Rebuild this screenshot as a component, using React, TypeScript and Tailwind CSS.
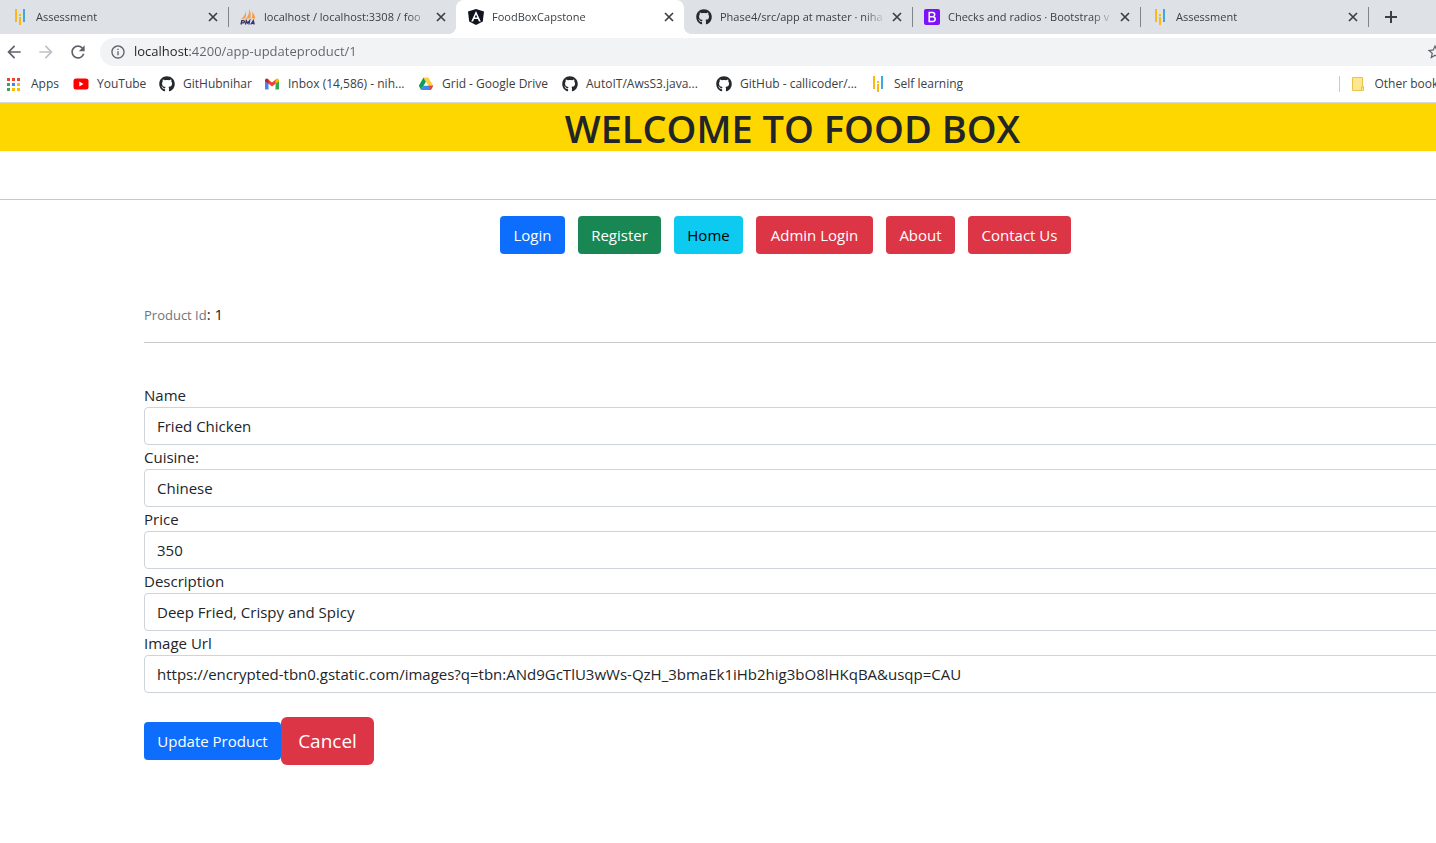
import type { ReactNode } from "react";
import { MdArrowBack, MdArrowForward, MdInfoOutline, MdRefresh, MdStarBorder } from "react-icons/md";
import { FaGithub } from "react-icons/fa";

const Bars = () => (
  <svg viewBox="0 0 16 16" className="size-4" aria-hidden="true">
    <path d="M3 0h2v13H3zM7 5h2v2H7zM7 8h2v8H7z" fill="#fbb917" />
    <path d="M11 0h2v13h-2z" fill="#3fa9dc" />
  </svg>
);

const PhpMyAdmin = () => (
  <svg viewBox="0 0 16 16" className="size-4" aria-hidden="true">
    <path d="M5.6 1.2C6 4 4.500 7.500 1 10l4.200-.7C6.300 6.800 6.400 3.500 5.600 1.200zM9 0c.6 4-.6 7-3 9.300l4.500-.3C11 5.500 10.500 2.400 9 0zM11.800 2.500c.8 2.500.7 4.500-.2 6.500l3.800.8c-.4-3-1.600-5.300-3.600-7.300z" fill="#f89c3c" />
    <path d="M.5 10.500c4-1.200 9.500-1.300 15-.2-5-.3-9.500-.1-15 .2z" fill="#e9b070" />
    <path d="M1 15.500l.8-3.800h1.600c1.600 0 1.300 2.200-.4 2.200H1.500M5.500 15.500l.8-3.800 1.300 2.400 2-2.400-.7 3.800M10.700 15.500l2.600-3.800.9 3.800M11.700 14.300h2.200" fill="none" stroke="#343268" strokeWidth="1.300" />
  </svg>
);

const Angular = () => (
  <svg viewBox="0 0 16 16" className="size-4" aria-hidden="true">
    <path d="M8 0l8 2.600-1.200 9.800L8 16l-6.800-3.600L0 2.600z" fill="#10141f" />
    <path d="M8 2L3.200 12.500h1.900l1-2.400h3.800l1 2.400h1.900zm0 3.600l1.300 3H6.700z" fill="#fff" />
  </svg>
);

const Github = () => <FaGithub className="size-4 text-[#24292e]" />;

const Bootstrap = () => (
  <svg viewBox="0 0 16 16" className="size-4" aria-hidden="true">
    <rect width="16" height="16" rx="2" fill="#7c12f8" />
    <path d="M5.200 3.500h3.400c2.700 0 2.800 3.600.4 4.200 3 .4 2.900 4.800-.4 4.800H5.200zM5.200 7.700h3.500" fill="none" stroke="#fff" strokeWidth="1.500" />
  </svg>
);

const appColors = ["#ea4335", "#ea4335", "#ea4335", "#34a853", "#4285f4", "#fbbc05", "#34a853", "#fbbc05", "#fbbc05"];
const AppsGrid = () => (
  <svg viewBox="0 0 13 13" className="size-[13px]" aria-hidden="true">
    {appColors.map((c, i) => (
      <rect key={i} x={(i % 3) * 5} y={Math.floor(i / 3) * 5} width="3" height="3" fill={c} />
    ))}
  </svg>
);

const YouTube = () => (
  <svg viewBox="0 0 16 16" className="size-4" aria-hidden="true">
    <rect x="0.500" y="2.500" width="15" height="11" rx="2.500" fill="#f00" />
    <path d="M6.300 5.600v4.800L10.500 8z" fill="#fff" />
  </svg>
);

const Gmail = () => (
  <svg viewBox="0 0 16 16" className="size-4" aria-hidden="true">
    <path d="M1 4h3.500v9.500H2c-.6 0-1-.4-1-1z" fill="#4285f4" />
    <path d="M15 4h-3.500v9.500H14c.6 0 1-.4 1-1z" fill="#34a853" />
    <path d="M4 3.300l4 3.100 4-3.100v4L8 10.400 4 7.300z" fill="#ea4335" />
    <path d="M1 4.500c0-1.900 1.700-2.500 2.800-1.600l.7.600v4.200L1 5.200z" fill="#c5221f" />
    <path d="M15 4.500c0-1.900-1.700-2.500-2.800-1.600l-.7.600v4.200L15 5.200z" fill="#fbbc04" />
  </svg>
);

const Drive = () => (
  <svg viewBox="0 0 16 16" className="size-4" aria-hidden="true">
    <path d="M5.500 1.500L.8 9.700l2.300 4.200L8 5.600z" fill="#0f9d58" />
    <path d="M5.500 1.500h4.900l4.800 8.200h-4.800z" fill="#ffcd40" />
    <path d="M3.100 13.900L5.500 9.700h9.700l-2.400 4.200z" fill="#4285f4" />
    <path d="M12.800 13.900L10.400 9.700h4.800z" fill="#ea4335" />
  </svg>
);

const Folder = () => (
  <svg viewBox="0 0 14 16" className="h-4 w-[14px]" aria-hidden="true">
    <path d="M1.500 1.500h10v9h1v4h-11z" fill="#ffe694" stroke="#e8c444" />
    <path d="M10.500 14.500v-3.500h2v3.500" fill="#ffe694" stroke="#e8c444" />
  </svg>
);

const Close = () => (
  <svg viewBox="0 0 14 14" className="size-[14px]" aria-hidden="true">
    <path d="M3 3l8 8M11 3l-8 8" stroke="currentColor" strokeWidth="1.700" />
  </svg>
);

const Plus = () => (
  <svg viewBox="0 0 20 20" className="size-5" aria-hidden="true">
    <path d="M10 4v12M4 10h12" stroke="currentColor" strokeWidth="2" />
  </svg>
);

type Tab = { title: string; icon: ReactNode; active?: boolean; divider?: boolean };
const tabs: Tab[] = [
  { title: "Assessment", icon: <Bars />, divider: true },
  { title: "localhost / localhost:3308 / foo", icon: <PhpMyAdmin /> },
  { title: "FoodBoxCapstone", icon: <Angular />, active: true },
  { title: "Phase4/src/app at master · niha", icon: <Github />, divider: true },
  { title: "Checks and radios · Bootstrap v", icon: <Bootstrap />, divider: true },
  { title: "Assessment", icon: <Bars />, divider: true },
];

const bookmarks = [
  { label: "Apps", icon: <AppsGrid />, width: "w-[66px]" },
  { label: "YouTube", icon: <YouTube />, width: "w-[86px]" },
  { label: "GitHubnihar", icon: <Github />, width: "w-[105px]" },
  { label: "Inbox (14,586) - nih...", icon: <Gmail />, width: "w-[154px]" },
  { label: "Grid - Google Drive", icon: <Drive />, width: "w-[144px]" },
  { label: "AutoIT/AwsS3.java...", icon: <Github />, width: "w-[154px]" },
  { label: "GitHub - callicoder/...", icon: <Github />, width: "w-[154px]" },
  { label: "Self learning", icon: <Bars />, width: "w-[110px]" },
];

const links = [
  { label: "Login", style: "w-[65px] bg-[#0d6efd] text-white" },
  { label: "Register", style: "w-[83px] bg-[#198754] text-white" },
  { label: "Home", style: "w-[69px] bg-[#0dcaf0] text-black" },
  { label: "Admin Login", style: "w-[117px] bg-[#dc3545] text-white" },
  { label: "About", style: "w-[69px] bg-[#dc3545] text-white" },
  { label: "Contact Us", style: "w-[103px] bg-[#dc3545] text-white" },
];

const fields = [
  { id: "name", label: "Name", value: "Fried Chicken" },
  { id: "cuisine", label: "Cuisine:", value: "Chinese" },
  { id: "price", label: "Price", value: "350" },
  { id: "description", label: "Description", value: "Deep Fried, Crispy and Spicy" },
  {
    id: "image",
    label: "Image Url",
    value: "https://encrypted-tbn0.gstatic.com/images?q=tbn:ANd9GcTlU3wWs-QzH_3bmaEk1iHb2hig3bO8lHKqBA&usqp=CAU",
  },
];

function BrowserTab({ title, icon, active, divider }: Tab) {
  return (
    <div className={`relative flex h-[34px] w-[228px] shrink-0 items-center pl-3 ${active ? "rounded-t-lg bg-white" : ""}`}>
      {active && (
        <>
          <span className="absolute bottom-0 -left-2 size-2 bg-[radial-gradient(circle_at_0_0,#dee1e6_8px,#fff_8px)]" />
          <span className="absolute -right-2 bottom-0 size-2 bg-[radial-gradient(circle_at_100%_0,#dee1e6_8px,#fff_8px)]" />
        </>
      )}
      <span className="flex w-6 shrink-0 items-center">{icon}</span>
      <span className="w-[166px] overflow-hidden whitespace-nowrap [mask-image:linear-gradient(to_right,#000_144px,transparent_166px)]">
        {title}
      </span>
      <button aria-label="Close tab" className="ml-1 text-[#3c4043]">
        <Close />
      </button>
      {divider && <span className="absolute top-[7px] -right-px h-5 w-px bg-[#808489]" />}
    </div>
  );
}

function Browser() {
  return (
    <header className="overflow-hidden border-b border-[#d5d8dc] bg-white text-[12px] text-[#3c4043]">
      <div className="flex h-[34px] items-center bg-[#dee1e6] text-[11px]">
        {tabs.map((t, i) => (
          <BrowserTab key={i} {...t} />
        ))}
        <button aria-label="New tab" className="ml-[13px] shrink-0">
          <Plus />
        </button>
      </div>
      <div className="flex h-9 items-center pl-1 text-[#5f6368]">
        <button aria-label="Back" className="mr-3"><MdArrowBack className="size-5" /></button>
        <button aria-label="Forward" className="mr-3 text-[#bdc1c6]"><MdArrowForward className="size-5" /></button>
        <button aria-label="Reload" className="mr-3"><MdRefresh className="size-5" /></button>
        <div className="flex h-7 flex-1 items-center rounded-l-full bg-[#f1f3f4] pl-[10px]">
          <MdInfoOutline className="mr-2 size-4 shrink-0" />
          <input
            aria-label="Address"
            defaultValue="localhost:4200/app-updateproduct/1"
            className="min-w-0 flex-1 bg-[linear-gradient(to_right,#202124_56px,#5f6368_56px)] bg-clip-text text-[13px] text-transparent caret-black outline-none"
          />
          <button aria-label="Bookmark this page" className="-mr-2 shrink-0"><MdStarBorder className="size-[18px]" /></button>
        </div>
      </div>
      <nav className="flex h-8 items-center pb-1 pl-[7px] whitespace-nowrap">
        {bookmarks.map((b) => (
          <a key={b.label} href="#" className={`flex shrink-0 items-center ${b.width}`}>
            <span className="flex w-6 shrink-0 items-center">{b.icon}</span>
            {b.label}
          </a>
        ))}
        <a href="#" className="-mr-[37px] ml-auto flex h-4 shrink-0 items-center border-l border-[#c8cbcf] pl-[11px]">
          <span className="w-[23px]"><Folder /></span>
          Other bookmarks
        </a>
      </nav>
    </header>
  );
}

export default function App() {
  return (
    <div className="min-h-screen overflow-hidden bg-white font-['Open_Sans','Noto_Sans',sans-serif]">
      <Browser />
      <div className="w-[calc(100%+149px)] text-[15px] leading-6 text-[#212529]">
        <h1 className="h-12 bg-[#ffd700] text-center text-[38px] leading-[50px] font-semibold">WELCOME TO FOOD BOX</h1>
        <hr className="mt-12 border-[#c8c9ca]" />
        <nav className="mt-4 flex justify-center gap-[13px] pr-[14px]">
          {links.map((l) => (
            <button key={l.label} className={`h-[38px] rounded whitespace-nowrap ${l.style}`}>{l.label}</button>
          ))}
        </nav>
        <main className="mt-12 pl-36">
          <p><small className="text-[13px] text-[#6c757d]">Product Id</small>: 1</p>
          <hr className="mt-[15px] border-[#c8c9ca]" />
          <form className="mt-10" onSubmit={(e) => e.preventDefault()}>
            {fields.map((f) => (
              <div key={f.id}>
                <label htmlFor={f.id} className="block">{f.label}</label>
                <input id={f.id} defaultValue={f.value} className="block h-[38px] w-full rounded border border-[#ced4da] px-3" />
              </div>
            ))}
            <div className="mt-6 flex items-center">
              <button className="h-[38px] w-[137px] rounded bg-[#0d6efd] text-white">Update Product</button>
              <button type="button" className="h-12 w-[93px] rounded-md bg-[#dc3545] text-[19px] text-white">Cancel</button>
            </div>
          </form>
        </main>
      </div>
    </div>
  );
}
